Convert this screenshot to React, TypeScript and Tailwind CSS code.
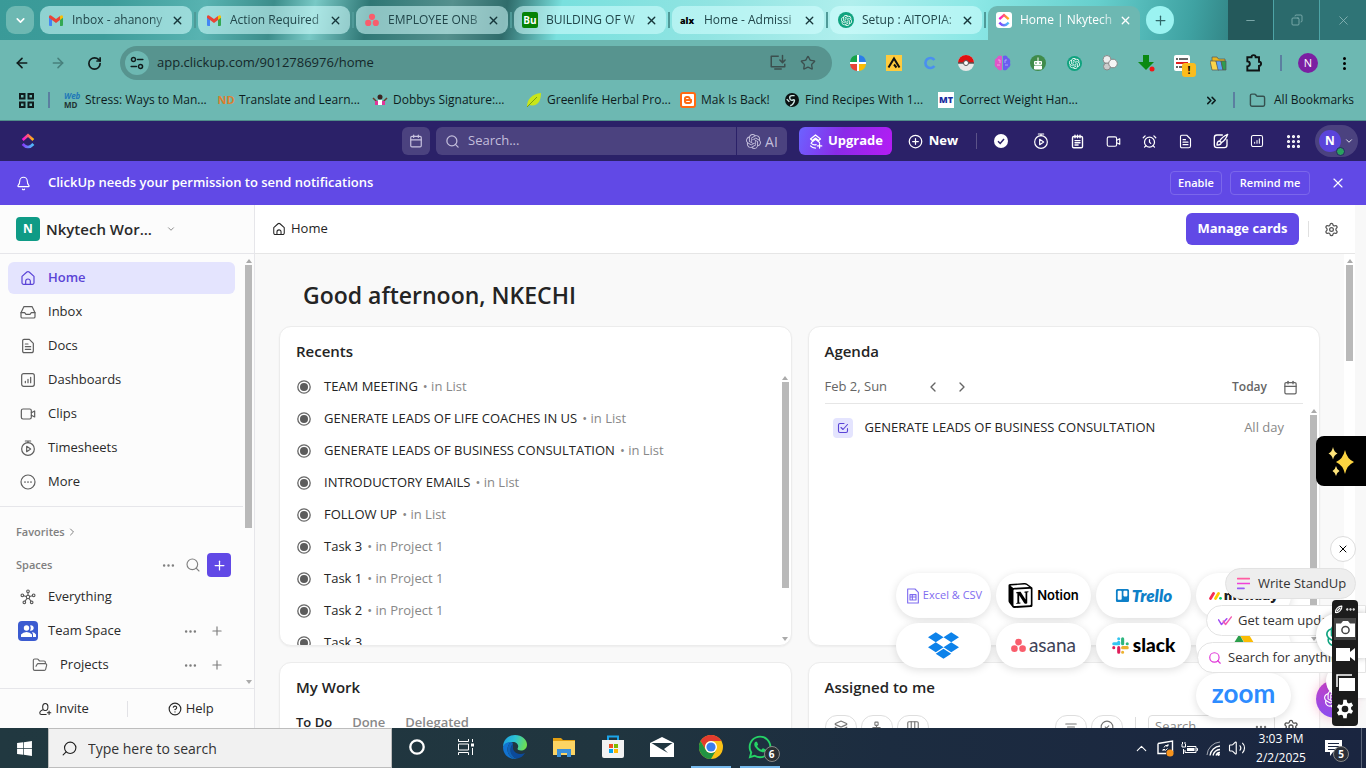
import React from "react";
import {
  ArrowLeft, ArrowRight, Bell, Calendar, ChevronDown, ChevronLeft, ChevronRight, ChevronUp,
  ChevronsRight, CircleHelp, Folder, FolderOpen, Grip, Layers, Plus, RotateCw, Search, Settings,
  Star, X, AlarmClock, Columns3, Network, CircleCheck, Minus, Copy, Volume2, Ellipsis,
} from "lucide-react";
import { SiNotion, SiOpenai, SiBlogger } from "react-icons/si";
import { FaDropbox, FaTrello, FaWhatsapp, FaWindows } from "react-icons/fa";

type IconProps = { size?: number; className?: string };
type SvgProps = IconProps & { box?: string; sw?: number; children: React.ReactNode };

const Svg = ({ size = 18, className = "", box = "0 0 24 24", sw = 1.8, children }: SvgProps) => (
  <svg
    width={size}
    height={size}
    viewBox={box}
    fill="none"
    stroke="currentColor"
    strokeWidth={sw}
    strokeLinecap="round"
    strokeLinejoin="round"
    className={"shrink-0 " + className}
    aria-hidden="true"
  >
    {children}
  </svg>
);

/* ---------- drawn icons ---------- */

const HomeIcon = (p: IconProps) => (
  <Svg {...p}>
    <path d="M3 9.500 10.300 3q1.700-1.300 3.400 0L21 9.500V19a2.500 2.500 0 0 1-2.500 2.500h-13A2.500 2.500 0 0 1 3 19z" />
    <path d="M8.500 21.500V17a3.500 3.500 0 0 1 7 0v4.500" />
  </Svg>
);
const InboxIcon = (p: IconProps) => (
  <Svg {...p}>
    <path d="M1.500 13 5 5.500A2 2 0 0 1 7 4h10a2 2 0 0 1 2 1.500l3.500 7.500v6a2 2 0 0 1-2 2h-17a2 2 0 0 1-2-2z" />
    <path d="M1.500 13H7l2 2.500h6l2-2.500h5.500" />
  </Svg>
);
const DocIcon = (p: IconProps) => (
  <Svg {...p}>
    <path d="M6 2h8l6 6v11a3 3 0 0 1-3 3H6a2 2 0 0 1-2-2V4a2 2 0 0 1 2-2z" />
    <path d="M8 9h4M8 13h8M8 17h8" />
  </Svg>
);
const NotepadIcon = (p: IconProps) => (
  <Svg {...p} sw={2.200}>
    <rect x="4" y="4" width="16" height="18" rx="2" />
    <path d="M8 2v4M12 2v4M16 2v4M8 10.500h8M8 14h8M8 17.500h5" />
  </Svg>
);
const BrushIcon = (p: IconProps) => (
  <Svg {...p} sw={2}>
    <path d="M14 3H6a4 4 0 0 0-4 4v11a4 4 0 0 0 4 4h11a4 4 0 0 0 4-4v-8" />
    <path d="M22 2q-9 4-12 10l2.500 2.500Q19 11 22 2zM10 12q-4 0-4 6 6 0 6.500-3.500" />
  </Svg>
);
const DashIcon = (p: IconProps) => (
  <Svg {...p}>
    <rect x="2.500" y="2.500" width="19" height="19" rx="3" />
    <path d="M8 16v-2M12 16v-5M16 16V8" />
  </Svg>
);
const ClipIcon = (p: IconProps) => (
  <Svg {...p}>
    <rect x="2" y="4.500" width="15" height="15" rx="2.500" />
    <path d="m17 10 5-2.500v9L17 14" />
  </Svg>
);
const TimerIcon = (p: IconProps) => (
  <Svg {...p}>
    <circle cx="12" cy="13.500" r="9.500" />
    <path d="M8 1.500h8M12 1.500V4M10 9.500v8l6-4z" />
  </Svg>
);
const MoreIcon = (p: IconProps) => (
  <Svg {...p}>
    <circle cx="12" cy="12" r="10.500" />
    <path d="M7.500 12h.01M12 12h.01M16.500 12h.01" strokeWidth={2.600} />
  </Svg>
);
const HubIcon = (p: IconProps) => (
  <Svg {...p} sw={1.600}>
    <circle cx="12" cy="12" r="2.500" />
    <circle cx="12" cy="3.500" r="2" />
    <circle cx="3.500" cy="9.500" r="2" />
    <circle cx="20.500" cy="9.500" r="2" />
    <circle cx="6.500" cy="20" r="2" />
    <circle cx="17.500" cy="20" r="2" />
    <path d="M12 5.500v4M5.500 10.200l4 1M18.500 10.200l-4 1M7.500 18.200l3-4M16.500 18.200l-3-4" />
  </Svg>
);
const InviteIcon = (p: IconProps) => (
  <Svg {...p}>
    <path d="M12 14.500c-2.500 0-4-3-4-6.500s1.500-5.500 4.500-5.500S17 4.500 17 8s-1.500 6.500-4 6.500M9 13c-3 1.500-6 2-6 5.500 0 2 1 3 3 3h8M19 15.500v6M16 18.500h6" />
  </Svg>
);
const TaskIcon = (p: IconProps) => (
  <Svg {...p} sw={2.200}>
    <path d="M14 3H6a3 3 0 0 0-3 3v12a3 3 0 0 0 3 3h12a3 3 0 0 0 3-3v-5" />
    <path d="m8 11 4 4 9-10" />
  </Svg>
);
const StatusDot = () => (
  <svg width="14" height="14" viewBox="0 0 14 14" className="shrink-0" aria-hidden="true">
    <circle cx="7" cy="7" r="6.200" fill="none" stroke="#666" strokeWidth="1.300" />
    <circle cx="7" cy="7" r="4" fill="#5c5c5c" />
  </svg>
);
const ClickUpMark = ({ size = 16 }: IconProps) => (
  <svg width={size} height={size} viewBox="0 0 24 24" fill="none" aria-hidden="true">
    <defs>
      <linearGradient id="cuTop" x1="3" y1="8" x2="21" y2="8" gradientUnits="userSpaceOnUse">
        <stop stopColor="#ff02f0" />
        <stop offset="0.500" stopColor="#ff5f6d" />
        <stop offset="1" stopColor="#ffc800" />
      </linearGradient>
      <linearGradient id="cuBottom" x1="3" y1="18" x2="21" y2="18" gradientUnits="userSpaceOnUse">
        <stop stopColor="#8930fd" />
        <stop offset="1" stopColor="#49ccf9" />
      </linearGradient>
    </defs>
    <path d="m4 10.500 8-7 8 7" stroke="url(#cuTop)" strokeWidth="4" />
    <path d="M4 16.500q8 9 16 0" stroke="url(#cuBottom)" strokeWidth="4" />
  </svg>
);
const GmailMark = () => (
  <svg width="14" height="11" viewBox="0 0 14 11" className="shrink-0" aria-hidden="true">
    <path d="M0 1.500V10q0 1 1 1h2V4z" fill="#4285f4" />
    <path d="M14 1.500V10q0 1-1 1h-2V4z" fill="#34a853" />
    <path d="M11 1v4l3-2.200V1.500Q13.500-.5 11 1z" fill="#fbbc04" />
    <path d="M0 1.500v1.300L7 8l4-3V1L7 4 2 .4Q.3 0 0 1.500z" fill="#ea4335" />
  </svg>
);
const AsanaMark = ({ size = 14 }: IconProps) => (
  <svg width={size} height={size} viewBox="0 0 24 24" fill="#f95d6c" className="shrink-0" aria-hidden="true">
    <circle cx="12" cy="6.500" r="5.300" />
    <circle cx="5.500" cy="17" r="5.300" />
    <circle cx="18.500" cy="17" r="5.300" />
  </svg>
);
const SlackMark = () => (
  <svg width="17" height="17" viewBox="0 0 24 24" fill="none" strokeWidth="4.400" strokeLinecap="round" aria-hidden="true">
    <path d="M9.500 7.500V9.500M2.500 9.500h7" stroke="#36c5f0" />
    <path d="M9.500 2.500v.01" stroke="#36c5f0" />
    <path d="M15 2.500v7M21.500 9.500v.01" stroke="#2eb67d" />
    <path d="M9.500 15v6.500M2.500 15v.01" stroke="#e01e5a" />
    <path d="M15 15h6.500M15 21.500v.01" stroke="#ecb22e" />
  </svg>
);
const GearSolid = () => (
  <svg width="20" height="20" viewBox="0 0 24 24" fill="#fff" fillRule="evenodd" aria-hidden="true">
    <path d="M10 1h4l.6 3.200 2 1.100 3.100-1 2 3.400-2.400 2.200v2.300l2.400 2.200-2 3.400-3.100-1-2 1.100L14 23h-4l-.6-3.100-2-1.100-3.100 1-2-3.400 2.400-2.200v-2.300L2.300 9.700l2-3.400 3.100 1 2-1.100zM12 8a4 4 0 1 0 0 8 4 4 0 0 0 0-8z" />
  </svg>
);

/* ---------- browser ---------- */

const tabs = [
  { title: "Inbox - ahanony", icon: <GmailMark /> },
  { title: "Action Required", icon: <GmailMark /> },
  { title: "EMPLOYEE ONB", icon: <AsanaMark /> },
  {
    title: "BUILDING OF W",
    icon: <span className="flex h-4 w-4 items-center justify-center rounded-xs bg-[#068306] text-[10px] font-bold text-white">Bu</span>,
  },
  { title: "Home - Admissi", icon: <span className="w-4 text-[9px] leading-none font-extrabold text-black">alx</span> },
  {
    title: "Setup : AITOPIA:",
    icon: <span className="flex h-4 w-4 items-center justify-center rounded-full bg-[#10a37f] text-white"><SiOpenai size={11} /></span>,
  },
];

const TabStrip = () => (
  <div className="flex h-10 shrink-0 bg-[linear-gradient(100deg,#3a9a98_0%,#3d9c9a_8%,#58b3b1_15%,#3c8d8b_20%,#79c9c6_23%,#2f7775_27%,#55908e_33%,#2f6c6b_37%,#79e0de_41%,#91e4e2_52%,#b0efed_62%,#8ce8e6_71%,#66cfcd_80%,#3fa2a2_87%,#2f7d7e_91%,#2c7375_94%,#43999a_100%)]">
    <button aria-label="Search tabs" className="mt-[6px] ml-[6px] flex h-7 w-7 shrink-0 items-center justify-center rounded-[9px] bg-[#6db8b2] text-white">
      <ChevronDown size={13} strokeWidth={3} />
    </button>
    <div className="ml-[6px] flex min-w-0 flex-1">
      {tabs.map((t) => (
        <div key={t.title} className="flex h-full w-[158px] min-w-0 items-center">
          <div className="flex h-7 min-w-0 flex-1 items-center rounded-[9px] bg-[#d5ffff]/55 pr-2 pl-2">
            <span className="flex w-4 justify-center">{t.icon}</span>
            <button className="ml-2 min-w-0 flex-1 overflow-hidden text-left text-[12px] whitespace-nowrap text-[#21464a] [mask-image:linear-gradient(90deg,#000_80%,rgba(0,0,0,0.2))]">
              {t.title}
            </button>
            <button aria-label={"Close " + t.title} className="text-[#16363a]"><X size={13} strokeWidth={2.500} /></button>
          </div>
          <span className="mx-[2px] h-4 w-[2px] bg-[#4f9a98]" />
        </div>
      ))}
      <div className="flex h-full w-[152px] min-w-0 items-end">
        <div className="flex h-[34px] w-full items-center rounded-t-[9px] bg-[#6db8b2] pr-2 pb-[6px] pl-2">
          <span className="flex h-4 w-4 items-center justify-center rounded-[3px] bg-white"><ClickUpMark size={14} /></span>
          <button className="ml-2 min-w-0 flex-1 overflow-hidden text-left text-[12px] whitespace-nowrap text-white [mask-image:linear-gradient(90deg,#000_80%,rgba(0,0,0,0.2))]">
            Home | Nkytech
          </button>
          <button aria-label="Close Home" className="text-white"><X size={13} strokeWidth={2.500} /></button>
        </div>
      </div>
      <button aria-label="New tab" className="mt-[6px] ml-[6px] flex h-7 w-7 shrink-0 items-center justify-center rounded-full bg-[#9bf3f1] text-[#30686a]">
        <Plus size={15} />
      </button>
    </div>
    <div className="flex shrink-0 text-[#8fb9ba]">
      <button aria-label="Minimize" className="flex w-[46px] items-center justify-center border-r border-[#4ea4a6] bg-[#24595b]"><Minus size={13} strokeWidth={1.500} /></button>
      <button aria-label="Restore" className="flex w-[46px] items-center justify-center border-r border-[#4ea4a6] bg-[#2b6a6c]"><Copy size={12} strokeWidth={1.500} className="-scale-x-100" /></button>
      <button aria-label="Close window" className="flex w-[46px] items-center justify-center bg-[#2f7476]"><X size={15} strokeWidth={1.300} /></button>
    </div>
  </div>
);

const extensions: { name: string; icon: React.ReactNode }[] = [
  {
    name: "Color wheel",
    icon: (
      <svg width="16" height="16" viewBox="0 0 16 16"><path d="M7 7V0a8 8 0 0 0-7 7z" fill="#16a34a" /><path d="M9 7h7a8 8 0 0 0-7-7z" fill="#2b7de9" /><path d="M7 9H0a8 8 0 0 0 7 7z" fill="#ea4335" /><path d="M9 9v7a8 8 0 0 0 7-7z" fill="#fbbc04" /><path d="M8 0v16M0 8h16" stroke="#fff" strokeWidth="2" /></svg>
    ),
  },
  {
    name: "Apollo",
    icon: (
      <svg width="16" height="16" viewBox="0 0 16 16"><path fill="#ffcb3d" d="M0 0h16v16H0z" /><path d="M2.500 12.500 8 3.500l5.500 9M8 9.500l2.500 3" stroke="#111" strokeWidth="2" fill="none" /></svg>
    ),
  },
  { name: "Crystal", icon: <Svg size={14} sw={4.500} className="text-[#4a8ff0]"><path d="M19.500 7A8.500 8.500 0 1 0 19.500 17" strokeLinecap="butt" /></Svg> },
  {
    name: "Poké ball",
    icon: (
      <svg width="16" height="16" viewBox="0 0 16 16"><circle cx="8" cy="8" r="8" fill="#e8e8e8" /><path d="M0 8a8 8 0 0 1 16 0z" fill="#e01010" /><path d="M0 8h16" stroke="#555" strokeWidth="1.500" /><circle cx="8" cy="8" r="2.500" fill="#fff" stroke="#555" /></svg>
    ),
  },
  {
    name: "Brain",
    icon: (
      <svg width="17" height="16" viewBox="0 0 17 16"><path d="M8 1C5-.5 3.500 1.500 3 3 .5 4 .5 6 1 8c-1 2 0 4 2 5 1 2.500 4 3 5 1.500z" fill="#e056c8" /><path d="M9 1c3-1.500 4.500.5 5 2 2.500 1 2.500 3 2 5 1 2 0 4-2 5-1 2.500-4 3-5 1.500z" fill="#6a5cf0" /><path d="M4 5h2v3M3 10h3M13 5h-2v3M14 10h-3" stroke="#fff" strokeOpacity=".45" fill="none" /></svg>
    ),
  },
  {
    name: "Robot",
    icon: (
      <svg width="16" height="16" viewBox="0 0 16 16"><circle cx="8" cy="8" r="8" fill="#3f8b4b" /><rect x="4" y="6" width="8" height="4" rx="1" fill="#fff" /><path d="M4.500 11h7v3h-7zM8 2.500V6" fill="#fff" stroke="#fff" /><path d="M6 7v2M10 7v2" stroke="#3f8b4b" /></svg>
    ),
  },
  { name: "ChatGPT", icon: <span className="flex h-[15px] w-[15px] items-center justify-center rounded-full bg-[#10a37f] text-white"><SiOpenai size={11} /></span> },
  {
    name: "Circles",
    icon: (
      <svg width="16" height="16" viewBox="0 0 16 16" stroke="#888"><circle cx="5" cy="4.500" r="4" fill="#eee" /><circle cx="5" cy="11.500" r="3.500" fill="#ccc" /><circle cx="11" cy="8.500" r="4.300" fill="#f5f5f5" /></svg>
    ),
  },
  {
    name: "Download",
    icon: (
      <svg width="17" height="17" viewBox="0 0 17 17"><path d="M5 0h6v7h5l-8 8-8-8h5z" fill="#0b8a12" /><circle cx="14" cy="14" r="2.500" fill="#f01818" /></svg>
    ),
  },
  {
    name: "Notes",
    icon: (
      <span className="relative block h-4 w-4">
        <svg width="16" height="16" viewBox="0 0 16 16"><rect width="16" height="16" rx="2" fill="#fff" /><path d="M2 4h2M5 4h9M2 12h2M5 12h9" stroke="#333" strokeWidth="1.500" /><path d="M2 8h12" stroke="#e02020" strokeWidth="2" /></svg>
        <span className="absolute top-2 left-2 flex h-[14px] w-[14px] items-center justify-center rounded-[3px] bg-[#fbbc1c] text-[10px] font-bold text-black">!</span>
      </span>
    ),
  },
  {
    name: "Files",
    icon: (
      <svg width="17" height="15" viewBox="0 0 17 15" stroke="#555" strokeWidth=".7"><path d="M2 1h5l1.500 2H15v9H2z" fill="#e9b51f" /><path d="M0 5h6l3 9H2z" fill="#fbd34a" /><path d="M6 5h5l2 9H8z" fill="#5ba2f5" /><path d="M11 5h5v9h-3z" fill="#2e9e4f" /></svg>
    ),
  },
  {
    name: "Extensions",
    icon: (
      <Svg size={20} sw={2.300} className="text-[#0f1414]"><path d="M4 5h5a2.500 2.500 0 0 1 5 0h4v5.500a2.500 2.500 0 0 1 0 5V21H4v-5a3 3 0 0 0 0-6z" strokeLinejoin="miter" /></Svg>
    ),
  },
];

const Toolbar = () => (
  <div className="flex h-[46px] shrink-0 items-center bg-[#6db8b2] pr-1 pl-1 text-[#101c1c]">
    <button aria-label="Back" className="flex w-9 justify-center"><ArrowLeft size={16} strokeWidth={2.500} /></button>
    <button aria-label="Forward" className="flex w-9 justify-center text-[#47807c]"><ArrowRight size={16} strokeWidth={2.300} /></button>
    <button aria-label="Reload" className="flex w-9 justify-center"><RotateCw size={15} strokeWidth={2.700} /></button>
    <div className="ml-2 flex h-[34px] min-w-0 flex-1 items-center rounded-full bg-[#57948f] pr-[10px] pl-[5px]">
      <button aria-label="Site information" className="flex h-6 w-6 shrink-0 items-center justify-center rounded-full bg-[#6db8b2]">
        <Svg size={14} sw={2.600}><circle cx="6" cy="6" r="3.500" /><path d="M13 6h9M2 18h9" /><circle cx="18" cy="18" r="3.500" /></Svg>
      </button>
      <input aria-label="Address" defaultValue="app.clickup.com/9012786976/home" className="ml-2 min-w-0 flex-1 bg-transparent text-[13px] text-[#14282a] outline-none" />
      <button aria-label="Install app" className="flex w-8 justify-center text-[#3b4f4e]">
        <Svg size={18} sw={2}><path d="M12 3H3v14h18v-3M8 20h8" strokeLinecap="square" /><path d="M18 2v9M14.500 8l3.500 3.500L21.500 8" /></Svg>
      </button>
      <button aria-label="Bookmark this tab" className="flex w-7 justify-center text-[#3b4f4e]"><Star size={16} strokeWidth={2} /></button>
    </div>
    <div className="ml-2 flex">
      {extensions.map((e) => (
        <button key={e.name} aria-label={e.name} className="flex h-6 w-9 items-center justify-center">{e.icon}</button>
      ))}
    </div>
    <span className="mx-2 h-4 w-[2px] bg-[#5b7fa0]" />
    <button aria-label="Profile" className="flex w-9 justify-center">
      <span className="flex h-5 w-5 items-center justify-center rounded-full bg-[#7b1fa2] text-[11px] text-white">N</span>
    </button>
    <button aria-label="Browser menu" className="flex w-9 flex-col items-center gap-[2px]">
      <span className="h-[3px] w-[3px] rounded-full bg-black" /><span className="h-[3px] w-[3px] rounded-full bg-black" /><span className="h-[3px] w-[3px] rounded-full bg-black" />
    </button>
  </div>
);

const bookmarks = [
  {
    w: "w-[154px]",
    title: "Stress: Ways to Man...",
    icon: <span className="flex w-4 flex-col text-[8px] leading-[9px] font-bold"><i className="text-[#2178b8]">Web</i><span className="text-[#223333]">MD</span></span>,
  },
  { w: "w-[154px]", title: "Translate and Learn...", icon: <span className="text-[11px] font-bold text-[#dd7f2f]">ND</span> },
  {
    w: "w-[154px]",
    title: "Dobbys Signature:...",
    icon: <svg width="16" height="14" viewBox="0 0 16 14"><path d="m1 5 4 4 3-1 3 1 4-4" stroke="#6b3a2a" strokeWidth="1.500" fill="none" /><circle cx="8" cy="4" r="2.500" fill="#3a2420" /><path d="M6 7h4v5H6z" fill="#fff" /><path d="M3 8h3v4H3zM10 8h3v4h-3z" fill="#e0359a" /></svg>,
  },
  {
    w: "w-[154px]",
    title: "Greenlife Herbal Pro...",
    icon: <svg width="16" height="16" viewBox="0 0 16 16"><path d="M1 15C1 7 6 2 15 1c0 8-3 14-12 12z" fill="#c9e619" /><path d="M1 15 11 5" stroke="#7b9f10" /></svg>,
  },
  { w: "w-[104px]", title: "Mak Is Back!", icon: <span className="flex h-4 w-4 items-center justify-center rounded-[3px] bg-[#ff6a13] text-white"><SiBlogger size={12} /></span> },
  {
    w: "w-[154px]",
    title: "Find Recipes With 1...",
    icon: <svg width="14" height="14" viewBox="0 0 16 16"><circle cx="8" cy="8" r="8" fill="#0b1212" /><path d="M11 3H8Q5 3 5.500 6T9 8t1 3-4 3M2 7l3 3" stroke="#cfe9e6" strokeWidth="1.600" fill="none" /></svg>,
  },
  { w: "w-[154px]", title: "Correct Weight Han...", icon: <span className="flex h-4 w-4 items-center justify-center bg-white text-[9px] font-extrabold text-[#1b2fa0]">MT</span> },
];

const Bookmarks = () => (
  <div className="flex h-[35px] shrink-0 items-center border-b border-[#4f8d8a] bg-[#6db8b2] pb-[6px] text-[12px] text-[#0d1c1d]">
    <button aria-label="Apps" className="ml-4 flex w-5 justify-center">
      <svg width="15" height="15" viewBox="0 0 15 15" fill="none" stroke="#101c1c" strokeWidth="2"><path d="M1 1h4.500v4.500H1zM9.500 1H14v4.500H9.500zM1 9.500h4.500V14H1zM9.500 9.500H14V14H9.500z" /></svg>
    </button>
    <span className="mx-3 h-4 w-[2px] bg-[#5b7fa0]" />
    <div className="ml-[2px] flex min-w-0 flex-1">
      {bookmarks.map((b) => (
        <a key={b.title} href="#" className={"flex min-w-0 items-center gap-[5px] whitespace-nowrap " + b.w}>
          <span className="flex w-4 shrink-0 justify-center">{b.icon}</span>
          {b.title}
        </a>
      ))}
    </div>
    <button aria-label="More bookmarks"><ChevronsRight size={15} strokeWidth={2.500} /></button>
    <span className="mx-[14px] h-4 w-[2px] bg-[#5b7fa0]" />
    <button className="flex items-center gap-2 pr-3"><Folder size={17} className="text-[#35504f]" />All Bookmarks</button>
  </div>
);

/* ---------- shared pieces ---------- */

const Bar = ({ thumb, bg = "" }: { thumb: string; bg?: string }) => (
  <div className={"flex w-[11px] shrink-0 flex-col items-center " + bg} aria-hidden="true">
    <span className="mt-[5px] mb-[2px] border-x-[3px] border-b-[4px] border-x-transparent border-b-[#aaa]" />
    <span className={"w-[7px] bg-[#b9b9b9] " + thumb} />
    <span className="mt-auto mb-[4px] border-x-[3px] border-t-[4px] border-x-transparent border-t-[#aaa]" />
  </div>
);

/* ---------- app header ---------- */

const tools: { name: string; icon: React.ReactNode }[] = [
  { name: "Timer", icon: <TimerIcon size={16} /> },
  { name: "Notepad", icon: <NotepadIcon size={15} /> },
  { name: "Clip", icon: <ClipIcon size={15} /> },
  { name: "Reminder", icon: <AlarmClock size={15} /> },
  { name: "New doc", icon: <DocIcon size={15} /> },
  { name: "Whiteboard", icon: <BrushIcon size={16} /> },
  { name: "Dashboard", icon: <DashIcon size={14} /> },
  { name: "All tools", icon: <Grip size={17} strokeWidth={2.500} /> },
];

const AppHeader = () => (
  <header className="flex h-10 shrink-0 items-center bg-[#2b2168] text-white">
    <a href="#" aria-label="ClickUp" className="ml-5"><ClickUpMark size={16} /></a>
    <div className="flex flex-1 justify-end">
      <button aria-label="Calendar" className="mr-[6px] flex h-7 w-7 items-center justify-center rounded-md bg-[#4b427f] text-[#c9c4e0]"><Calendar size={14} /></button>
      <div className="flex h-7 w-[351px] items-center rounded-md bg-[#4b427f] text-[#c3bedb]">
        <Search size={15} className="ml-[9px]" />
        <input aria-label="Search" placeholder="Search..." className="ml-2 min-w-0 flex-1 bg-transparent text-[13px] outline-none placeholder:text-[#c3bedb]" />
        <button className="flex h-7 w-[51px] items-center justify-center gap-1 border-l border-[#2b2168] text-[14px]">
          <SiOpenai size={15} />AI
        </button>
      </div>
      <button className="ml-3 flex h-7 w-[93px] items-center justify-center gap-[5px] rounded-md bg-[linear-gradient(110deg,#6c63ff,#8a2be8_45%,#b51cf5)] text-[13px] font-bold">
        <Svg size={15} sw={2}><path d="m4 8 8-6.500L20 8l-3 2.500-5-4-5 4zM5.500 13.500 12 8.500l6.500 5M5 15q4 3.500 8 2M4 19q3 3.500 8 3.500M18.500 15.500v7M15 19h7" /></Svg>
        Upgrade
      </button>
      <button className="ml-3 flex h-7 w-[58px] items-center justify-center gap-[6px] text-[13px] font-bold">
        <Svg size={15} sw={2}><circle cx="12" cy="12" r="10" /><path d="M12 7.500v9M7.500 12h9" /></Svg>
        New
      </button>
      <span className="mt-[6px] ml-[14px] h-4 w-px bg-[#5c5389]" />
      <button aria-label="Tasks" className="ml-[6px] flex h-7 w-9 items-center justify-center">
        <svg width="14" height="14" viewBox="0 0 14 14"><circle cx="7" cy="7" r="7" fill="#fff" /><path d="m4 7.300 2.200 2.200L10 5" fill="none" stroke="#2b2168" strokeWidth="1.500" /></svg>
      </button>
      <div className="ml-1 flex">
        {tools.map((t) => (
          <button key={t.name} aria-label={t.name} className="flex h-7 w-9 items-center justify-center">{t.icon}</button>
        ))}
      </div>
    </div>
    <button aria-label="Account" className="mr-2 ml-1 flex h-8 w-[43px] shrink-0 items-center justify-center gap-[3px] rounded-full bg-[#4b427f]">
      <span className="relative flex h-[22px] w-[22px] items-center justify-center rounded-full bg-[#5a44da] text-[12px] font-bold">
        N
        <span className="absolute -right-1 -bottom-1 h-[9px] w-[9px] rounded-full border border-[#2b2168] bg-[#2aa15f]" />
      </span>
      <ChevronDown size={10} />
    </button>
  </header>
);

const Banner = () => (
  <div className="flex h-11 shrink-0 items-center bg-[#6149e6] pr-5 pl-4 text-white">
    <Bell size={15} strokeWidth={1.800} />
    <p className="ml-[17px] flex-1 text-[13px] font-semibold">ClickUp needs your permission to send notifications</p>
    <button className="h-6 w-[52px] rounded border border-[#7b67eb] text-[11px] font-semibold">Enable</button>
    <button className="ml-2 h-6 w-20 rounded border border-[#7b67eb] text-[11px] font-semibold">Remind me</button>
    <button aria-label="Dismiss" className="ml-5"><X size={16} strokeWidth={1.700} /></button>
  </div>
);

/* ---------- sidebar ---------- */

const navItems = [
  { label: "Home", Icon: HomeIcon },
  { label: "Inbox", Icon: InboxIcon },
  { label: "Docs", Icon: DocIcon },
  { label: "Dashboards", Icon: DashIcon },
  { label: "Clips", Icon: ClipIcon },
  { label: "Timesheets", Icon: TimerIcon },
  { label: "More", Icon: MoreIcon },
];

const RowActions = ({ name }: { name: string }) => (
  <span className="ml-auto flex items-center gap-3 pr-[11px] text-[#7d7d7d]">
    <button aria-label={name + " options"}><Ellipsis size={15} /></button>
    <button aria-label={"Add to " + name}><Plus size={14} /></button>
  </span>
);

const Sidebar = () => (
  <aside className="flex w-[255px] shrink-0 flex-col border-r border-[#e6e6ea] bg-[#fcfcfc] text-[13px] text-[#2a2a2a]">
    <div className="flex h-[49px] shrink-0 items-center border-b border-[#e6e6ea] pl-4">
      <span className="flex h-6 w-6 items-center justify-center rounded bg-[#0f9b86] text-[12px] font-bold text-white">N</span>
      <button className="ml-[6px] flex items-center gap-[10px] text-[15px] font-semibold">
        <span className="w-[110px] text-left whitespace-nowrap">Nkytech Wor...</span>
        <ChevronDown size={10} className="text-[#777]" />
      </button>
    </div>
    <div className="flex min-h-0 flex-1">
      <div className="min-w-0 flex-1 overflow-hidden pt-2">
        <nav className="flex flex-col gap-[2px] pr-2 pl-2">
          {navItems.map(({ label, Icon }, i) => (
            <a
              key={label}
              href="#"
              className={"flex h-8 items-center gap-3 rounded-md pl-3 " + (i === 0 ? "bg-[#e4e4fe] font-semibold text-[#5a43d6]" : "")}
            >
              <Icon size={16} className={i === 0 ? "" : "text-[#5e5e5e]"} />
              {label}
            </a>
          ))}
        </nav>
        <div className="mt-2 border-t border-[#e6e6ea] pt-4 pr-2 text-[11px] font-semibold text-[#808080]">
          <button className="flex h-[18px] items-center gap-px pl-4">Favorites<ChevronRight size={12} /></button>
          <div className="mt-3 flex h-6 items-center pr-1 pl-4">
            <span className="flex-1">Spaces</span>
            <button aria-label="Spaces options"><Ellipsis size={15} /></button>
            <button aria-label="Search spaces" className="ml-[9px]"><Search size={16} strokeWidth={1.700} /></button>
            <button aria-label="Create space" className="ml-[6px] flex h-6 w-6 items-center justify-center rounded bg-[#6149e6] text-white"><Plus size={15} /></button>
          </div>
        </div>
        <ul className="mt-1 flex flex-col gap-[2px] pr-2 pl-5">
          <li className="flex h-8 items-center gap-3"><HubIcon size={16} className="text-[#555]" />Everything</li>
          <li className="flex h-8 items-center">
            <span className="-ml-[2px] flex h-5 w-5 items-center justify-center rounded bg-[#3b5bd0]">
              <svg width="15" height="13" viewBox="0 0 15 13" fill="#fff"><circle cx="5.500" cy="3" r="2.700" /><path d="M0 12V9.500Q2 7 5.500 7T11 9.500V12z" /><path d="M9 .5a2.700 2.700 0 1 1 0 5Q10.500 3 9 .5zM12 12h3V9.500Q13.500 7.300 11 7q1 1.500 1 2.500z" /></svg>
            </span>
            <span className="ml-[10px]">Team Space</span>
            <RowActions name="Team Space" />
          </li>
          <li className="flex h-8 items-center pl-3">
            <FolderOpen size={16} strokeWidth={1.700} className="text-[#666]" />
            <span className="ml-3">Projects</span>
            <RowActions name="Projects" />
          </li>
        </ul>
      </div>
      <Bar thumb="h-[263px]" />
    </div>
    <div className="flex h-10 shrink-0 items-center border-t border-[#e6e6ea]">
      <button className="flex flex-1 items-center justify-center gap-1"><InviteIcon size={14} />Invite</button>
      <span className="h-4 w-px bg-[#e2e2e6]" />
      <button className="flex flex-1 items-center justify-center gap-1"><CircleHelp size={14} />Help</button>
    </div>
  </aside>
);

/* ---------- main ---------- */

const recents = [
  ["TEAM MEETING", "List"],
  ["GENERATE LEADS OF LIFE COACHES IN US", "List"],
  ["GENERATE LEADS OF BUSINESS CONSULTATION", "List"],
  ["INTRODUCTORY EMAILS", "List"],
  ["FOLLOW UP", "List"],
  ["Task 3", "Project 1"],
  ["Task 1", "Project 1"],
  ["Task 2", "Project 1"],
  ["Task 3", ""],
];

const cardClass = "flex min-w-0 flex-col overflow-hidden rounded-xl border border-[#ececec] bg-white shadow-[0_1px_2px_rgba(0,0,0,0.05)]";
const titleClass = "h-11 shrink-0 pt-[13px] pl-4 text-[15px] leading-[22px] font-semibold";

const RoundTool = ({ label, children }: { label: string; children: React.ReactNode }) => (
  <button aria-label={label} className="flex h-6 w-8 items-center justify-center rounded-full border border-[#dedede] text-[#777]">{children}</button>
);

const Main = () => (
  <main className="flex min-w-0 flex-1 flex-col bg-[#f9f9f9] text-[#242424]">
    <div className="flex h-[49px] shrink-0 items-center border-b border-[#e6e6e6] bg-white pr-4 pl-[17px] text-[13px]">
      <HomeIcon size={14} />
      <span className="ml-[5px] flex-1">Home</span>
      <button className="h-8 w-[113px] rounded-md bg-[#6149e6] text-[13px] font-bold text-white">Manage cards</button>
      <span className="mx-[9px] h-4 w-px bg-[#e0e0e0]" />
      <button aria-label="Home settings" className="ml-[6px] text-[#555]"><Settings size={15} /></button>
    </div>
    <div className="flex min-h-0 flex-1">
      <div className="min-w-0 flex-1 overflow-hidden px-6">
        <h1 className="flex h-[72px] items-center pt-[10px] pl-6 text-[23px] font-semibold">Good afternoon, NKECHI</h1>
        <div className="grid auto-rows-[320px] grid-cols-2 gap-4">
          <section className={cardClass}>
            <h2 className={titleClass}>Recents</h2>
            <div className="flex min-h-0 flex-1">
              <ul className="min-w-0 flex-1 overflow-hidden text-[13px]">
                {recents.map(([name, place], i) => (
                  <li key={i} className="flex h-8 items-center gap-[5px] pl-[17px] whitespace-nowrap">
                    <StatusDot />
                    <span className="ml-2">{name}</span>
                    {place && <span className="text-[#888]">• in {place}</span>}
                  </li>
                ))}
              </ul>
              <Bar thumb="h-[206px]" />
            </div>
          </section>
          <section className={cardClass}>
            <h2 className={titleClass}>Agenda</h2>
            <div className="mx-4 flex h-[33px] shrink-0 items-center border-b border-[#e6e6e6] text-[13px] text-[#656565]">
              <span className="w-[100px]">Feb 2, Sun</span>
              <button aria-label="Previous day"><ChevronLeft size={16} /></button>
              <button aria-label="Next day" className="ml-[13px]"><ChevronRight size={16} /></button>
              <button className="ml-auto text-[12px] font-semibold">Today</button>
              <button aria-label="Pick a date" className="mr-[5px] ml-4"><Calendar size={15} /></button>
            </div>
            <div className="flex min-h-0 flex-1">
              <div className="flex h-12 min-w-0 flex-1 items-center pr-6 pl-6 text-[13px]">
                <span className="flex h-5 w-5 items-center justify-center rounded bg-[#e4e4fe] text-[#5a43d6]"><TaskIcon size={12} /></span>
                <span className="ml-3 flex-1 whitespace-nowrap">GENERATE LEADS OF BUSINESS CONSULTATION</span>
                <span className="text-[#888]">All day</span>
              </div>
              <Bar thumb="h-[200px]" />
            </div>
          </section>
          <section className={cardClass}>
            <h2 className={titleClass}>My Work</h2>
            <div className="flex h-8 items-center gap-5 pl-4 text-[13px] font-semibold text-[#888]">
              <button className="text-[#242424]">To Do</button>
              <button>Done</button>
              <button>Delegated</button>
            </div>
          </section>
          <section className={cardClass}>
            <h2 className={titleClass}>Assigned to me</h2>
            <div className="mt-2 flex items-center gap-1 pr-5 pl-4">
              <RoundTool label="Group"><Layers size={14} /></RoundTool>
              <RoundTool label="Subtasks"><Network size={13} /></RoundTool>
              <RoundTool label="Columns"><Columns3 size={14} /></RoundTool>
              <span className="flex-1" />
              <RoundTool label="Filter"><Svg size={14}><path d="M3 7h18M6 12h12M9 17h6" /></Svg></RoundTool>
              <RoundTool label="Show closed"><CircleCheck size={14} /></RoundTool>
              <span className="mx-2 h-5 w-px bg-[#ddd]" />
              <label className="flex h-6 w-[127px] items-center rounded border border-[#dedede] px-[6px] text-[13px]">
                <input aria-label="Search assigned tasks" placeholder="Search" className="min-w-0 flex-1 outline-none placeholder:text-[#888]" />
                <Ellipsis size={14} className="text-[#777]" />
              </label>
              <button aria-label="Card settings" className="ml-1 text-[#555]"><Settings size={16} /></button>
            </div>
          </section>
        </div>
      </div>
      <Bar thumb="h-24" bg="bg-white" />
    </div>
  </main>
);

/* ---------- floating widgets ---------- */

const logoClass = "flex h-[45px] w-[95px] items-center justify-center rounded-full bg-white shadow-[0_2px_8px_rgba(0,0,0,0.13)]";

const ImportLogos = () => (
  <div className="absolute right-[75px] bottom-[10px] grid grid-cols-4 gap-[5px]">
    <button className={logoClass + " gap-[2px] text-[11px] text-[#7f6cf0]"}>
      <Svg size={16} sw={1.700}><path d="M4 1.500h11l5 5v16H4zM7.500 10h9v8h-9zM7.500 13.500h9M11 10v8" /></Svg>
      Excel &amp; CSV
    </button>
    <button className={logoClass + " gap-1 font-[Inter,sans-serif] text-[13px] font-semibold text-black"}><SiNotion size={25} />Notion</button>
    <button className={logoClass + " gap-[2px] font-[Lato,sans-serif] text-[17px] font-extrabold text-[#0e80c8] italic"}><FaTrello size={15} />Trello</button>
    <button className={logoClass + " gap-[2px] text-[13px] font-extrabold text-[#222]"}>
      <svg width="13" height="8" viewBox="0 0 13 8" strokeLinecap="round" strokeWidth="2.800"><path d="m1.500 6.500 3-5" stroke="#f62b54" /><path d="m6.500 6.500 3-5" stroke="#fc0" /><path d="M11.500 6.300v.01" stroke="#00ca72" /></svg>
      monday
    </button>
    <button aria-label="Dropbox" className={logoClass + " text-[#0d82ea]"}><FaDropbox size={31} /></button>
    <button className={logoClass + " gap-[3px] font-[Lato,sans-serif] text-[19px] text-[#3e4257]"}><AsanaMark size={15} />asana</button>
    <button className={logoClass + " gap-1 font-[Lato,sans-serif] text-[19px] font-black text-black"}><SlackMark />slack</button>
    <button aria-label="Google Drive" className={logoClass}>
      <svg width="28" height="26" viewBox="0 0 24 22"><path d="M8 1h8l8 13h-8z" fill="#fbbc04" /><path d="M8 1 0 14l4 7 8-13z" fill="#2b9e4b" /><path d="M4 21 8 14h16l-4 7z" fill="#4285f4" /></svg>
    </button>
    <button className={logoClass + " col-start-4 pb-1 font-[Lato,sans-serif] text-[26px] font-bold text-[#2d8cff]"}>zoom</button>
  </div>
);

const Floaters = () => (
  <>
    <ImportLogos />
    <button aria-label="AI sparkles" className="absolute right-0 bottom-[242px] flex h-[50px] w-[50px] items-center justify-center rounded-l-lg bg-black">
      <svg width="28" height="30" viewBox="0 0 28 30" fill="#fbd341"><path d="M18 4q2 9 9 12-7 3-9 12-2-9-9-12 7-3 9-12z" /><path d="M6 1q1 5 4.500 6.500-3.500 1.500-4.500 6-1-4.500-4.500-6Q5 6 6 1zM9 20q.8 3.500 3.500 5-2.700 1.500-3.500 5-.8-3.500-3.500-5 2.700-1.500 3.500-5z" fill="#fde37a" /></svg>
    </button>
    <button aria-label="Close assistant" className="absolute right-[10px] bottom-[166px] flex h-[26px] w-[26px] items-center justify-center rounded-full border border-[#ddd] bg-white"><X size={12} /></button>
    <button aria-label="Assistant menu" className="absolute right-[12px] bottom-[10px] flex h-[38px] w-[38px] items-center rounded-full bg-[linear-gradient(180deg,#c541c4,#8a4cf0)] pl-2 text-white shadow-[0_0_12px_rgba(240,100,150,0.4)]">
      <SiOpenai size={18} />
    </button>
    <div className="absolute right-0 bottom-[30px] h-[34px] w-10 rounded-l-full bg-white shadow-[0_0_4px_rgba(0,0,0,0.12)]" />
    <button className="absolute right-[10px] bottom-[129px] flex h-[31px] w-[131px] items-center gap-2 rounded-full border border-[#e2e2e2] bg-[#eee] pl-[11px] text-[13px] whitespace-nowrap text-[#333]">
      <Svg size={13} sw={3}><path d="M1 3h22" stroke="#ff5da2" /><path d="M1 12h22" stroke="#f040d8" /><path d="M1 21h12" stroke="#9a5cf5" /></Svg>
      Write StandUp
    </button>
    <button className="absolute right-0 bottom-[92px] flex h-[31px] w-[160px] items-center gap-[6px] overflow-hidden rounded-l-full border border-[#e4e4e4] bg-white pl-[11px] text-[13px] whitespace-nowrap text-[#333]">
      <Svg size={14} sw={2.500}><path d="m1 10 5 8 9-10" stroke="#a04cf5" /><path d="m9 12 4 6L23 5" stroke="#f45bb0" /></Svg>
      Get team updates
    </button>
    <button className="absolute right-0 bottom-[55px] flex h-[31px] w-[169px] items-center gap-[6px] overflow-hidden rounded-l-full border border-[#e4e4e4] bg-white pl-[10px] text-[13px] whitespace-nowrap text-[#333]">
      <Search size={14} className="text-[#e037d8]" />
      Search for anything
    </button>
    <button aria-label="Assistant" className="absolute right-0 bottom-[70px] flex h-[45px] w-[50px] items-center rounded-l-full bg-white pl-[10px] text-[#10a37f] shadow-[0_0_6px_rgba(0,0,0,0.25)]">
      <SiOpenai size={24} />
    </button>
    <div className="absolute right-2 bottom-[2px] flex h-[126px] w-[26px] flex-col items-center rounded bg-[#1c1c1c] text-white">
      <button aria-label="Recorder options" className="flex h-[18px] items-center gap-[2px]">
        <Svg size={9} sw={3}><path d="M4 20C2 12 12 2 21 3c1 9-9 19-17 17zM8 16l8-8" /></Svg>
        <Ellipsis size={11} strokeWidth={3} />
      </button>
      <button aria-label="Take screenshot" className="flex h-[22px] w-[22px] items-center justify-center bg-[#444]">
        <svg width="19" height="16" viewBox="0 0 19 16"><path d="M0 2.500h5L7 0h5l2 2.500h5V16H0z" fill="#fff" /><circle cx="9.500" cy="9" r="3.600" fill="#fff" stroke="#444" strokeWidth="1.500" /></svg>
      </button>
      <button aria-label="Record video" className="flex h-7 items-center">
        <svg width="19" height="13" viewBox="0 0 19 13" fill="#fff"><path d="M0 0h14v4l5-4v13l-5-4v4H0z" /></svg>
      </button>
      <button aria-label="Capture window" className="flex h-7 items-center">
        <svg width="19" height="17" viewBox="0 0 19 17"><path d="M1 13V1h15" fill="none" stroke="#fff" strokeWidth="1.500" /><path d="M3 4h16v13H3z" fill="#fff" /></svg>
      </button>
      <button aria-label="Recorder settings" className="flex h-[26px] items-center"><GearSolid /></button>
    </div>
  </>
);

/* ---------- taskbar ---------- */

const EdgeMark = () => (
  <svg width="24" height="24" viewBox="0 0 24 24">
    <defs><linearGradient id="edgeTop" x1="0" y1="0" x2="24" y2="8" gradientUnits="userSpaceOnUse"><stop stopColor="#1b9de2" /><stop offset=".5" stopColor="#2cc3d5" /><stop offset="1" stopColor="#6fe04e" /></linearGradient></defs>
    <path d="M0 12C0 5 5 0 12 0s12 5 12 9.500c0 4-3 6-6 6-3.500 0-4-1.500-3-3C16 10 13.500 7 10 7 5 7 1 10 0 12z" fill="url(#edgeTop)" />
    <path d="M0 12C1 8 5 6.500 9 7c-3 1-4.500 4-4.500 7.500C4.500 19 8 23 12 24 5 24 0 19 0 12z" fill="#1273d0" />
    <path d="M10 9c-5 5-2 14 4.500 14.500 3-.5 6-2.500 7.500-5.500-6 3-12-1-12-5z" fill="#0c4a9a" />
    <path d="M9 7c-3 1-4.500 4-4.500 7.500C4.500 19 8 23 12 24h2.500C8 22 5 14 10 9z" fill="#0f63b8" />
  </svg>
);
const ChromeMark = () => (
  <svg width="24" height="24" viewBox="0 0 24 24">
    <circle cx="12" cy="12" r="12" fill="#fbc116" />
    <path d="M1.600 6a12 12 0 0 1 20.800 0H12a6 6 0 0 0-5.200 9z" fill="#e33b2e" />
    <path d="M1.600 6a12 12 0 0 0 10.400 18l5.200-9a6 6 0 0 1-10.400 0z" fill="#229342" />
    <circle cx="12" cy="12" r="6" fill="#fff" /><circle cx="12" cy="12" r="4.600" fill="#3b7ded" />
  </svg>
);

const taskApps: { name: string; active?: boolean; icon: React.ReactNode }[] = [
  { name: "Cortana", icon: <svg width="16" height="16" viewBox="0 0 16 16"><circle cx="8" cy="8" r="6.700" fill="none" stroke="#fff" strokeWidth="2.300" /></svg> },
  {
    name: "Task view",
    icon: <svg width="16" height="16" viewBox="0 0 16 16" fill="none" stroke="#fff"><path d="M.5 0v2.500h10V0M.5 5h10v6H.5zM.5 16v-2.500h10V16M14.500 0v3M14.500 9v7" /><path fill="#fff" stroke="none" d="M13 4.500h3v3h-3z" /></svg>,
  },
  { name: "Edge", icon: <EdgeMark /> },
  {
    name: "File Explorer",
    icon: <svg width="22" height="19" viewBox="0 0 22 19"><path d="M0 0h8l2 2h12v5H0z" fill="#e29f12" /><path d="M0 3h22v14H0z" fill="#fcd463" /><path d="M4 19v-8h14v8h-4v-4H8v4z" fill="#3b90d9" /></svg>,
  },
  {
    name: "Store",
    icon: <svg width="24" height="24" viewBox="0 0 24 24"><path d="M7 6V1.500h10V6" fill="none" stroke="#1ba5ea" strokeWidth="2" /><path d="M1 5h22v16a2 2 0 0 1-2 2H3a2 2 0 0 1-2-2z" fill="#f2f2f2" /><path d="M8 9h4v4H8z" fill="#f25022" /><path d="M13 9h4v4h-4z" fill="#7fba00" /><path d="M8 14h4v4H8z" fill="#00a4ef" /><path d="M13 14h4v4h-4z" fill="#ffb900" /></svg>,
  },
  { name: "Mail", icon: <svg width="24" height="20" viewBox="0 0 24 20"><path d="M0 6 12 0l12 6v14H0z" fill="#fff" /><path d="M1.500 6h21L14 12l4 4-7-4z" fill="#203641" /></svg> },
  { name: "Chrome", active: true, icon: <ChromeMark /> },
  {
    name: "WhatsApp",
    active: true,
    icon: (
      <span className="relative text-[#25d366]">
        <FaWhatsapp size={26} />
        <span className="absolute top-3 left-[17px] flex h-4 w-4 items-center justify-center rounded-full border border-[#888] bg-[#2b2f33] text-[10px] font-bold text-white">6</span>
      </span>
    ),
  },
];

const Taskbar = () => (
  <footer className="flex h-10 shrink-0 bg-[linear-gradient(90deg,#213840,#20353f_45%,#1c2c40_65%,#1a2540)] text-white">
    <button aria-label="Start" className="flex w-12 shrink-0 items-center justify-center"><FaWindows size={17} /></button>
    <label className="flex w-[344px] items-center border border-[#bdbdbd] bg-[#f1f1f1] pl-3 text-[#222]">
      <Search size={17} strokeWidth={1.600} className="-scale-x-100" />
      <input aria-label="Type here to search" placeholder="Type here to search" className="ml-[10px] min-w-0 flex-1 bg-transparent text-[14px] outline-none placeholder:text-[#333]" />
    </label>
    <div className="flex">
      {taskApps.map((a) => (
        <button key={a.name} aria-label={a.name} className="flex w-[49px] flex-col items-center">
          <span className="flex h-[38px] items-center">{a.icon}</span>
          {a.active && <span className="h-[2px] w-10 bg-[#76b9ed]" />}
        </button>
      ))}
    </div>
    <div className="ml-auto flex items-center">
      <button aria-label="Hidden icons" className="flex w-6 justify-center"><ChevronUp size={17} strokeWidth={1.500} /></button>
      <button aria-label="Updates" className="flex w-6 justify-center">
        <svg width="17" height="17" viewBox="0 0 17 17" fill="none" stroke="#fff"><path d="M1 3.500 15.500 1v11M1 3.500v10h8" strokeWidth="1.400" /><path d="M11 5.500q-3-1-4 2M6 9.500q3 2 4.500-1M11 4v2H9M6 11V9.500h2" /><circle cx="13" cy="13" r="3.600" fill="#f7941d" stroke="none" /></svg>
      </button>
      <button aria-label="Battery" className="flex w-6 justify-center">
        <svg width="17" height="13" viewBox="0 0 17 13" fill="none" stroke="#fff"><path d="M6 4.500h9v6H4V8M15.500 6.500h1v2h-1M2.500 12V7M1 2v3h3.500V2M1.500 0v2M4 0v2" /><path d="M6 6h7.500v3H6z" fill="#fff" stroke="none" /></svg>
      </button>
      <button aria-label="Network" className="flex w-6 justify-center">
        <svg width="15" height="15" viewBox="0 0 15 15" fill="none" stroke="#fff"><path d="M1 14A14 14 0 0 1 14 1" opacity=".6" /><path d="M4 14.500A11 11 0 0 1 14 5M7 14.500A8 8 0 0 1 14 8.500M10 14.500q1-3 4-3" strokeWidth="1.300" /><circle cx="12.500" cy="13.500" r="1" fill="#fff" /></svg>
      </button>
      <button aria-label="Volume" className="flex w-6 justify-center"><Volume2 size={18} strokeWidth={1.500} /></button>
      <div className="w-16 text-center text-[12px] leading-[19px] whitespace-nowrap"><div>3:03 PM</div><div>2/2/2025</div></div>
      <button aria-label="Notifications" className="relative ml-[2px] flex w-9 justify-center">
        <svg width="17" height="16" viewBox="0 0 17 16"><path d="M0 0h17v12H8l-3 4v-4H0z" fill="#fff" /><path d="M3 3.500h11M3 6.500h11M3 9.500h7" stroke="#1a2540" /></svg>
        <span className="absolute top-[6px] left-[18px] flex h-4 w-4 items-center justify-center rounded-full border border-[#888] bg-[#2b2f38] text-[10px] font-bold">5</span>
      </button>
      <span className="mr-[4px] ml-[10px] h-10 w-px bg-[#5a6478]" />
    </div>
  </footer>
);

export default function App() {
  return (
    <div className="flex h-screen flex-col overflow-hidden bg-white font-['Open_Sans',sans-serif]">
      <TabStrip />
      <Toolbar />
      <Bookmarks />
      <div className="relative flex min-h-0 flex-1 flex-col">
        <AppHeader />
        <Banner />
        <div className="flex min-h-0 flex-1">
          <Sidebar />
          <Main />
          <div className="w-[11px] shrink-0 bg-[#f8f8f8]" />
        </div>
        <Floaters />
      </div>
      <Taskbar />
    </div>
  );
}
